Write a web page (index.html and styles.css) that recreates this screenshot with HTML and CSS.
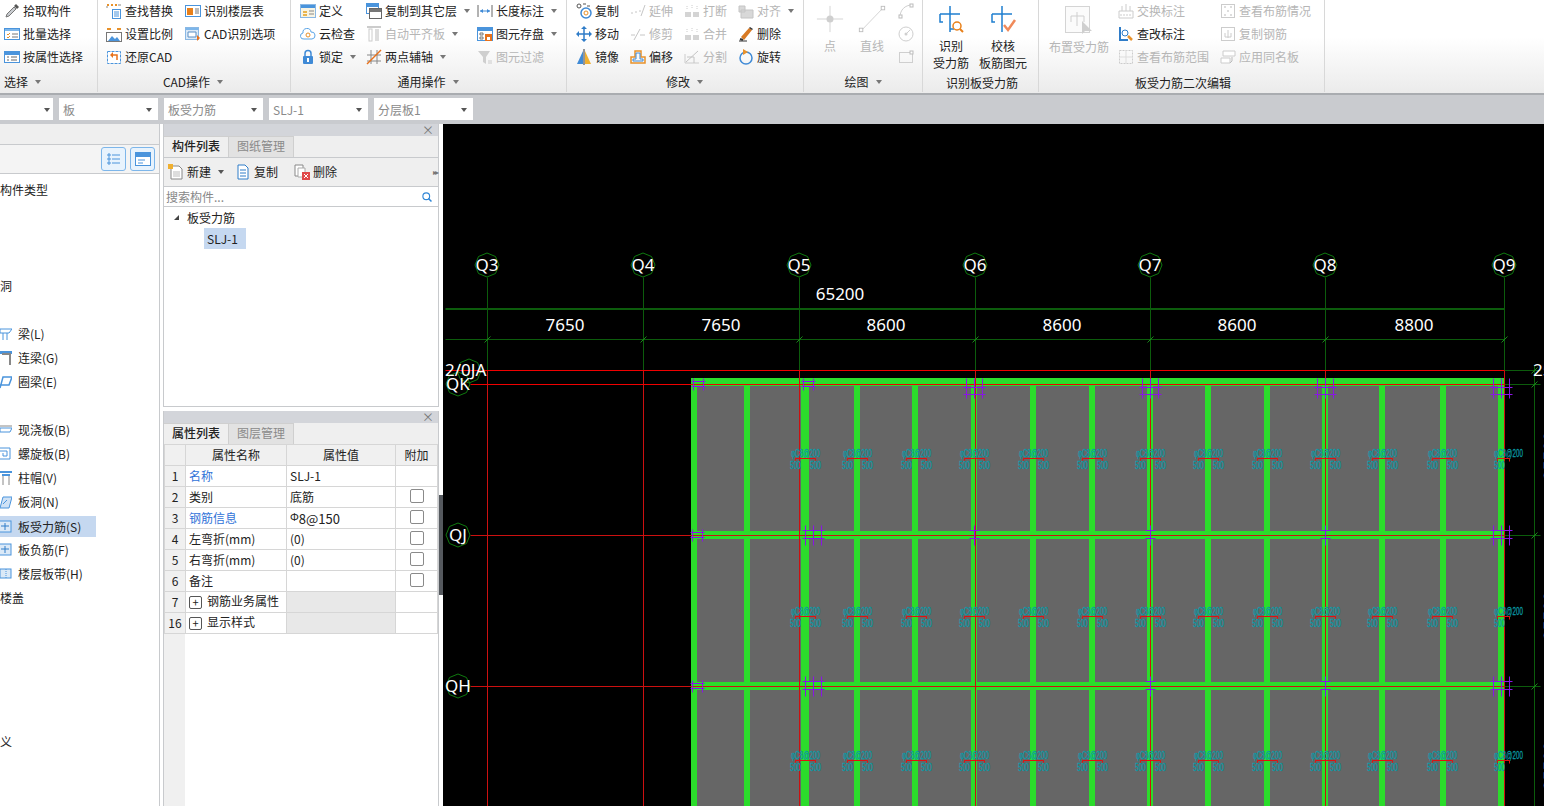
FILE: index.html
```html
<!DOCTYPE html>
<html lang="zh-CN">
<head>
    <meta charset="UTF-8">
    <title>板受力筋</title>
    <link rel="stylesheet" href="styles.css">
</head>
<body>
    <!-- icon library -->
    <svg class="defs" width="0" height="0">
        <symbol id="i-pick" viewBox="0 0 16 16"><path d="M2 14l1-3 7-7 2 2-7 7z" fill="#c9ccd0" stroke="#777"/><path d="M10 3l2-2 3 3-2 2z" fill="#555"/></symbol>
        <symbol id="i-batch" viewBox="0 0 16 16"><rect x=".5" y="2.5" width="15" height="11" fill="#fff" stroke="#4a94dc"/><rect x="1" y="3" width="14" height="2" fill="#7db6ea"/><path d="M3 8l1 1 2-2M3 11l1 1 2-2" stroke="#e8912a" fill="none"/><path d="M8 8h6M8 11h6" stroke="#777"/></symbol>
        <symbol id="i-attr" viewBox="0 0 16 16"><rect x=".5" y="2.5" width="15" height="11" fill="#fff" stroke="#4a94dc"/><rect x="1" y="3" width="14" height="3" fill="#4a94dc"/><path d="M3 8h2M3 11h2M7 8h6M7 11h6" stroke="#666"/></symbol>
        <symbol id="i-find" viewBox="0 0 16 16"><path d="M1 2h2M5 2h2M9 2h2" stroke="#e8912a" stroke-width="2"/><path d="M1 5v-2M12 2h3" stroke="#888"/><rect x="6.5" y="6.5" width="8" height="9" fill="#fff" stroke="#4a94dc"/><path d="M8 9h5M8 11h5M8 13h5" stroke="#4a94dc"/></symbol>
        <symbol id="i-scale" viewBox="0 0 16 16"><path d="M1 3h4M11 3h4" stroke="#e8912a" stroke-width="2"/><rect x=".5" y="6.5" width="15" height="9" fill="#fff" stroke="#777"/><path d="M2 15l4-5 3 3 2-2 3 4z" fill="#4a94dc"/></symbol>
        <symbol id="i-restore" viewBox="0 0 16 16"><rect x="1.5" y="2.5" width="13" height="12" fill="#fff" stroke="#4a94dc" stroke-dasharray="3 1"/><path d="M11 11V6H6" fill="none" stroke="#e8711a" stroke-width="1.5"/><path d="M7 3L4 6l3 3z" fill="#e8711a"/></symbol>
        <symbol id="i-table" viewBox="0 0 16 16"><rect x=".5" y="2.5" width="15" height="11" fill="#fff" stroke="#4a94dc"/><rect x="2" y="5" width="6" height="7" fill="#e8801a"/><path d="M10 6h4M10 8h4M10 10h4" stroke="#777"/></symbol>
        <symbol id="i-cadopt" viewBox="0 0 16 16"><rect x=".5" y="1.5" width="13" height="12" fill="#dbe9f7" stroke="#8ab8e4"/><rect x="1" y="2" width="12" height="2" fill="#7db6ea"/><path d="M3 6h8v5H3z" fill="#fff" stroke="#5b8fc4"/><path d="M12 9l3 3-3 3z" fill="#e8711a"/></symbol>
        <symbol id="i-define" viewBox="0 0 16 16"><rect x=".5" y="1.5" width="15" height="13" fill="#f8f4e4" stroke="#8ab8e4"/><rect x="1" y="2" width="14" height="3" fill="#4a94dc"/><path d="M3 8h4v2H3zM3 11h4v2H3z" fill="#e9b44c"/><path d="M9 8h5M9 11h5" stroke="#888"/></symbol>
        <symbol id="i-layer" viewBox="0 0 16 16"><rect x=".5" y=".5" width="12" height="10" fill="#fff" stroke="#4a94dc"/><rect x="1" y="1" width="11" height="3" fill="#4a94dc"/><rect x="3.5" y="5.5" width="12" height="10" fill="#fff" stroke="#666"/><rect x="4" y="6" width="11" height="3" fill="#777"/></symbol>
        <symbol id="i-length" viewBox="0 0 16 16"><path d="M1 2v12M15 2v12" stroke="#666"/><path d="M3 8h10" stroke="#3f8ad6"/><path d="M3 8l3-2v4zM13 8l-3-2v4z" fill="#3f8ad6"/></symbol>
        <symbol id="i-cloud" viewBox="0 0 16 16"><path d="M4 13a3 3 0 0 1-1-6 4 4 0 0 1 8-1 3.500 3.500 0 0 1 1 7z" fill="#fff" stroke="#5aa4e6"/><circle cx="8" cy="9" r="2" fill="none" stroke="#e8912a"/></symbol>
        <symbol id="i-align" viewBox="0 0 16 16"><path d="M1 1h14" stroke="#ccc" stroke-width="2"/><rect x="3" y="3" width="3" height="12" fill="#fff" stroke="#ccc"/><rect x="9" y="3" width="4" height="12" fill="#ddd"/></symbol>
        <symbol id="i-lock" viewBox="0 0 16 16"><path d="M5 7V4.500a3 3 0 0 1 6 0V7" fill="none" stroke="#3f8ad6" stroke-width="1.500"/><rect x="3" y="7" width="10" height="8" rx="1" fill="#3f8ad6"/><rect x="7" y="9" width="2" height="4" fill="#fff"/></symbol>
        <symbol id="i-axis" viewBox="0 0 16 16"><path d="M1 6h14M1 12h14M5 1v14M11 1v14" stroke="#888"/><path d="M1 15L15 1" stroke="#e8711a" stroke-width="1.500"/></symbol>
        <symbol id="i-save" viewBox="0 0 16 16"><rect x=".5" y="1.500" width="15" height="13" fill="#fff" stroke="#4a94dc"/><rect x="1" y="2" width="14" height="3" fill="#4a94dc"/><path d="M3 7h3v2H3zM3 11h3v2H3z" fill="none" stroke="#777"/><rect x="8" y="8" width="7" height="7" fill="#e8711a"/><rect x="10" y="11" width="3" height="3" fill="#fff"/></symbol>
        <symbol id="i-filter" viewBox="0 0 16 16"><path d="M1 2h12L9 8v7L6 13V8z" fill="#cfcfcf"/><path d="M11 12h4M11 14h4" stroke="#ccc"/></symbol>
        <symbol id="i-copy" viewBox="0 0 16 16"><circle cx="3" cy="3" r="2" fill="none" stroke="#555"/><path d="M7 1h3M11 3h3" stroke="#555"/><circle cx="10" cy="10" r="5" fill="none" stroke="#3f8ad6" stroke-width="1.500"/><circle cx="10" cy="10" r="2" fill="none" stroke="#e8912a"/></symbol>
        <symbol id="i-move" viewBox="0 0 16 16"><path d="M3 8h10M8 3v10" stroke="#2f7cc8" stroke-width="1.500"/><path d="M8 0l3 3H5zM8 16l3-3H5zM0 8l3-3v6zM16 8l-3-3v6z" fill="#2f7cc8"/></symbol>
        <symbol id="i-mirror" viewBox="0 0 16 16"><path d="M7 2v13H1z" fill="#3f8ad6"/><path d="M9 2v13h6z" fill="#f0b030"/><path d="M8 0v16" stroke="#333"/></symbol>
        <symbol id="i-offset" viewBox="0 0 16 16"><path d="M5 2h6v6h4v6H1V8h4z" fill="none" stroke="#e8912a" stroke-width="1.500"/><path d="M3 10h3V4h4v6h3v2H3z" fill="none" stroke="#3f8ad6"/></symbol>
        <symbol id="i-extend" viewBox="0 0 16 16"><path d="M1 10h2M5 9h2M9 8h2" stroke="#c6c6c6"/><path d="M11 13l4-11" stroke="#c6c6c6"/></symbol>
        <symbol id="i-trim" viewBox="0 0 16 16"><path d="M1 9h4M10 9h5" stroke="#c6c6c6"/><path d="M4 14l6-11" stroke="#c6c6c6"/></symbol>
        <symbol id="i-break" viewBox="0 0 16 16"><path d="M1 9h6v5H1zM9 9h6v5H9z" fill="#d4d4d4"/><path d="M3 3v4M8 2v3M13 3v4" stroke="#ccc" stroke-dasharray="1 1"/></symbol>
        <symbol id="i-same" viewBox="0 0 16 16"><path d="M1 3h6v6H1zM3 7h12v8H3z" fill="#d8d8d8" stroke="#c4c4c4"/></symbol>
        <symbol id="i-split" viewBox="0 0 16 16"><path d="M1 5v9h14" fill="none" stroke="#ccc"/><path d="M2 13L14 2M3 8h7v6" fill="none" stroke="#c4c4c4"/></symbol>
        <symbol id="i-del" viewBox="0 0 16 16"><path d="M3 11l8-9 3 2-8 10z" fill="#d87a24"/><path d="M11 2l1-1 3 2-1 1z" fill="#333"/><path d="M1 15h8" stroke="#333"/><path d="M2 13l3 1" stroke="#333" stroke-width="2"/></symbol>
        <symbol id="i-rot" viewBox="0 0 16 16"><circle cx="8" cy="9" r="6" fill="none" stroke="#3f8ad6" stroke-width="1.500"/><path d="M5 0l5 3-5 3z" fill="#e8912a"/></symbol>
        <symbol id="i-point" viewBox="0 0 32 32"><path d="M16 1v30M1 16h30" stroke="#cfcfcf"/><circle cx="16" cy="16" r="4" fill="#cfcfcf"/></symbol>
        <symbol id="i-line" viewBox="0 0 32 32"><path d="M4 29L29 3" stroke="#cfcfcf"/><rect x="1.500" y="26.500" width="4" height="4" fill="#fff" stroke="#bbb"/><rect x="26.500" y="1.500" width="4" height="4" fill="#fff" stroke="#bbb"/></symbol>
        <symbol id="i-arc" viewBox="0 0 16 16"><path d="M2 14C2 7 7 2 14 2" fill="none" stroke="#cfcfcf"/><rect x="1" y="12" width="3" height="3" fill="#fff" stroke="#bbb"/><rect x="12" y="1" width="3" height="3" fill="#fff" stroke="#bbb"/></symbol>
        <symbol id="i-circ" viewBox="0 0 16 16"><circle cx="8" cy="8" r="7" fill="none" stroke="#cfcfcf"/><circle cx="8" cy="8" r="1.500" fill="#cfcfcf"/><path d="M8 8l4-4" stroke="#cfcfcf"/></symbol>
        <symbol id="i-rect" viewBox="0 0 16 16"><rect x="1.500" y="3.500" width="13" height="10" fill="none" stroke="#cfcfcf"/><rect x="12" y="2" width="3" height="3" fill="#fff" stroke="#bbb"/></symbol>
        <symbol id="i-read" viewBox="0 0 28 28"><path d="M13 1v26M3 9h20" stroke="#1f7fd0" stroke-width="1.500"/><path d="M3 9v8h3M23 9v0M13 24h4" fill="none" stroke="#1f7fd0" stroke-width="1.500"/><circle cx="20" cy="21" r="4" fill="#fff" stroke="#e8801a" stroke-width="1.500"/><path d="M23 24l3 3" stroke="#e8801a" stroke-width="2"/></symbol>
        <symbol id="i-check" viewBox="0 0 28 28"><path d="M13 1v26M3 9h20" stroke="#1f7fd0" stroke-width="1.500"/><path d="M3 9v8h3" fill="none" stroke="#1f7fd0" stroke-width="1.500"/><path d="M15 20l4 5 7-10" fill="none" stroke="#f08a5a" stroke-width="2.500"/></symbol>
        <symbol id="i-place" viewBox="0 0 28 28"><rect x=".5" y=".5" width="24" height="26" fill="#fbfbfb" stroke="#d4d4d4"/><path d="M12 6v14M6 10h13M6 10v6M19 10v6" fill="none" stroke="#cfcfcf"/><path d="M17 15l10 10H20l-3 3z" fill="#cfcfcf"/></symbol>
        <symbol id="i-swap" viewBox="0 0 16 16"><path d="M1 8h14v7H1z" fill="#fff" stroke="#ccc"/><path d="M4 8v-5M8 8v-7M12 8v-5M3 11v2M6 11v2M9 11v2M12 11v2" stroke="#ccc"/></symbol>
        <symbol id="i-edit" viewBox="0 0 16 16"><path d="M2 1v13h8" fill="none" stroke="#2f7cc8" stroke-width="2"/><circle cx="7" cy="7" r="3" fill="#fff" stroke="#2f7cc8"/><path d="M10 10l4 4" stroke="#e8912a" stroke-width="2.500"/></symbol>
        <symbol id="i-range" viewBox="0 0 16 16"><rect x="1.500" y="1.500" width="13" height="13" fill="none" stroke="#ccc" stroke-dasharray="2 1"/><path d="M8 1v14M1 8h14" stroke="#ddd"/></symbol>
        <symbol id="i-view" viewBox="0 0 16 16"><rect x="1.500" y="1.500" width="13" height="13" fill="#fff" stroke="#ccc"/><path d="M4 4h2M10 4h2M8 7v2M4 12h2M10 12h2" stroke="#bbb"/></symbol>
        <symbol id="i-dup" viewBox="0 0 16 16"><rect x="1.500" y="1.500" width="13" height="13" fill="#fff" stroke="#ccc"/><path d="M8 4v8M5 7v4h6V7" fill="none" stroke="#ccc"/></symbol>
        <symbol id="i-apply" viewBox="0 0 16 16"><path d="M3 2h12v5H3zM1 9h9v5H1z" fill="#fff" stroke="#ccc"/><path d="M12 8v4l-2 2" fill="none" stroke="#bbb"/></symbol>
        <symbol id="i-list" viewBox="0 0 16 16"><path d="M2 3h2v2H2zM2 7h2v2H2zM2 11h2v2H2z" fill="none" stroke="#4a94dc"/><path d="M6 4h8M6 8h8M6 12h8" stroke="#4a94dc"/></symbol>
        <symbol id="i-form" viewBox="0 0 16 16"><rect x=".5" y="1.500" width="15" height="13" fill="#fff" stroke="#4a94dc"/><rect x="1" y="2" width="14" height="4" fill="#4a94dc"/><path d="M3 9h7M3 12h5" stroke="#4a94dc"/></symbol>
        <symbol id="i-new" viewBox="0 0 16 16"><path d="M3 2h8l3 3v10H3z" fill="#fff" stroke="#888"/><path d="M5 8h7M5 10h7M5 12h7" stroke="#bbb"/><rect x="0" y="0" width="5" height="5" fill="#f0b030"/></symbol>
        <symbol id="i-dcopy" viewBox="0 0 16 16"><path d="M3 1h7l3 3v11H3z" fill="#fff" stroke="#2f7cc8"/><path d="M5 6h6M5 9h6M5 12h6" stroke="#2f7cc8"/></symbol>
        <symbol id="i-ddel" viewBox="0 0 16 16"><path d="M1 1h8v11H1z" fill="#fff" stroke="#888"/><path d="M4 4h7v9H4z" fill="#fff" stroke="#aaa"/><rect x="8" y="8" width="8" height="8" fill="#e04a4a"/><path d="M10 10l4 4M14 10l-4 4" stroke="#fff"/></symbol>
        <symbol id="i-search" viewBox="0 0 16 16"><circle cx="7" cy="7" r="4.500" fill="none" stroke="#2f86d6" stroke-width="1.500"/><path d="M10 10l4 4" stroke="#2f86d6" stroke-width="2"/></symbol>
        <symbol id="t-beam" viewBox="0 0 12 16"><path d="M0 3h12l-3 4H0zM3 7v7M7 7v7" fill="none" stroke="#4a94dc"/></symbol>
        <symbol id="t-lintel" viewBox="0 0 12 16"><path d="M0 1h12v3H0z" fill="#4a94dc"/><path d="M2 4h8v11" fill="none" stroke="#888" stroke-width="2"/></symbol>
        <symbol id="t-ring" viewBox="0 0 12 16"><path d="M0 14l3-11h9l-3 8H0" fill="none" stroke="#4a94dc" stroke-width="1.500"/></symbol>
        <symbol id="t-slab" viewBox="0 0 12 16"><path d="M0 6h12l-2 4H0z" fill="#fff" stroke="#4a94dc"/><path d="M0 4h12" stroke="#888"/></symbol>
        <symbol id="t-spiral" viewBox="0 0 12 16"><path d="M0 2h10v11H0M0 5h7v5H3V7" fill="none" stroke="#4a94dc"/></symbol>
        <symbol id="t-cap" viewBox="0 0 12 16"><path d="M0 2h12M2 5h8" stroke="#4a94dc" stroke-width="2"/><path d="M3 6v9M9 6v9" stroke="#888"/></symbol>
        <symbol id="t-hole" viewBox="0 0 12 16"><path d="M0 14l3-11h9l-3 11z" fill="#cfe2f6" stroke="#4a94dc"/><path d="M3 10l4-4" stroke="#4a94dc"/></symbol>
        <symbol id="t-bar" viewBox="0 0 12 16"><rect x="-2" y="2" width="13" height="11" fill="#dbe9f7" stroke="#4a94dc"/><path d="M5 4v7M1 7h8" stroke="#2f7cc8"/></symbol>
        <symbol id="t-strip" viewBox="0 0 12 16"><rect x="0" y="3" width="11" height="9" fill="#dbe9f7" stroke="#4a94dc"/><path d="M6 3v9" stroke="#4a94dc" stroke-dasharray="1 1"/></symbol>
    </svg>

    <header class="ribbon">
        <section class="group g-select">
            <div class="group-body">
                <div class="col">
                    <div class="tool"><svg class="ic"><use href="#i-pick"/></svg><span>拾取构件</span></div>
                    <div class="tool"><svg class="ic"><use href="#i-batch"/></svg><span>批量选择</span></div>
                    <div class="tool"><svg class="ic"><use href="#i-attr"/></svg><span>按属性选择</span></div>
                </div>
            </div>
            <div class="group-label left">选择<i class="caret"></i></div>
        </section>
        <section class="group g-cad">
            <div class="group-body">
                <div class="col w79">
                    <div class="tool"><svg class="ic"><use href="#i-find"/></svg><span>查找替换</span></div>
                    <div class="tool"><svg class="ic"><use href="#i-scale"/></svg><span>设置比例</span></div>
                    <div class="tool"><svg class="ic"><use href="#i-restore"/></svg><span>还原CAD</span></div>
                </div>
                <div class="col">
                    <div class="tool"><svg class="ic"><use href="#i-table"/></svg><span>识别楼层表</span></div>
                    <div class="tool"><svg class="ic"><use href="#i-cadopt"/></svg><span>CAD识别选项</span></div>
                </div>
            </div>
            <div class="group-label">CAD操作<i class="caret"></i></div>
        </section>
        <section class="group g-common">
            <div class="group-body">
                <div class="col w66">
                    <div class="tool"><svg class="ic"><use href="#i-define"/></svg><span>定义</span></div>
                    <div class="tool"><svg class="ic"><use href="#i-cloud"/></svg><span>云检查</span></div>
                    <div class="tool"><svg class="ic"><use href="#i-lock"/></svg><span>锁定</span><i class="caret"></i></div>
                </div>
                <div class="col w111">
                    <div class="tool"><svg class="ic"><use href="#i-layer"/></svg><span>复制到其它层</span><i class="caret"></i></div>
                    <div class="tool off"><svg class="ic"><use href="#i-align"/></svg><span>自动平齐板</span><i class="caret"></i></div>
                    <div class="tool"><svg class="ic"><use href="#i-axis"/></svg><span>两点辅轴</span><i class="caret"></i></div>
                </div>
                <div class="col">
                    <div class="tool"><svg class="ic"><use href="#i-length"/></svg><span>长度标注</span><i class="caret"></i></div>
                    <div class="tool"><svg class="ic"><use href="#i-save"/></svg><span>图元存盘</span><i class="caret"></i></div>
                    <div class="tool off"><svg class="ic"><use href="#i-filter"/></svg><span>图元过滤</span></div>
                </div>
            </div>
            <div class="group-label">通用操作<i class="caret"></i></div>
        </section>
        <section class="group g-modify">
            <div class="group-body">
                <div class="col w54">
                    <div class="tool"><svg class="ic"><use href="#i-copy"/></svg><span>复制</span></div>
                    <div class="tool"><svg class="ic"><use href="#i-move"/></svg><span>移动</span></div>
                    <div class="tool"><svg class="ic"><use href="#i-mirror"/></svg><span>镜像</span></div>
                </div>
                <div class="col w54">
                    <div class="tool off"><svg class="ic"><use href="#i-extend"/></svg><span>延伸</span></div>
                    <div class="tool off"><svg class="ic"><use href="#i-trim"/></svg><span>修剪</span></div>
                    <div class="tool"><svg class="ic"><use href="#i-offset"/></svg><span>偏移</span></div>
                </div>
                <div class="col w54">
                    <div class="tool off"><svg class="ic"><use href="#i-break"/></svg><span>打断</span></div>
                    <div class="tool off"><svg class="ic"><use href="#i-break"/></svg><span>合并</span></div>
                    <div class="tool off"><svg class="ic"><use href="#i-split"/></svg><span>分割</span></div>
                </div>
                <div class="col">
                    <div class="tool off"><svg class="ic"><use href="#i-same"/></svg><span>对齐</span><i class="caret"></i></div>
                    <div class="tool"><svg class="ic"><use href="#i-del"/></svg><span>删除</span></div>
                    <div class="tool"><svg class="ic"><use href="#i-rot"/></svg><span>旋转</span></div>
                </div>
            </div>
            <div class="group-label">修改<i class="caret"></i></div>
        </section>
        <section class="group g-draw">
            <div class="group-body">
                <div class="big off w32"><svg class="ic-big"><use href="#i-point"/></svg><span>点</span></div>
                <div class="big off w32"><svg class="ic-big"><use href="#i-line"/></svg><span>直线</span></div>
                <div class="col">
                    <div class="tool"><svg class="ic"><use href="#i-arc"/></svg></div>
                    <div class="tool"><svg class="ic"><use href="#i-circ"/></svg></div>
                    <div class="tool"><svg class="ic"><use href="#i-rect"/></svg></div>
                </div>
            </div>
            <div class="group-label">绘图<i class="caret"></i></div>
        </section>
        <section class="group g-read">
            <div class="group-body">
                <div class="big w36"><svg class="ic-big"><use href="#i-read"/></svg><span>识别<br>受力筋</span></div>
                <div class="big w48"><svg class="ic-big"><use href="#i-check"/></svg><span>校核<br>板筋图元</span></div>
            </div>
            <div class="group-label low">识别板受力筋</div>
        </section>
        <section class="group g-edit">
            <div class="group-body">
                <div class="big off w60"><svg class="ic-big"><use href="#i-place"/></svg><span>布置受力筋</span></div>
                <div class="col w102">
                    <div class="tool off"><svg class="ic"><use href="#i-swap"/></svg><span>交换标注</span></div>
                    <div class="tool"><svg class="ic"><use href="#i-edit"/></svg><span>查改标注</span></div>
                    <div class="tool off"><svg class="ic"><use href="#i-range"/></svg><span>查看布筋范围</span></div>
                </div>
                <div class="col">
                    <div class="tool off"><svg class="ic"><use href="#i-view"/></svg><span>查看布筋情况</span></div>
                    <div class="tool off"><svg class="ic"><use href="#i-dup"/></svg><span>复制钢筋</span></div>
                    <div class="tool off"><svg class="ic"><use href="#i-apply"/></svg><span>应用同名板</span></div>
                </div>
            </div>
            <div class="group-label low">板受力筋二次编辑</div>
        </section>
    </header>

    <div class="combo-bar">
        <div class="combo first"><i class="caret dark"></i></div>
        <div class="combo"><span>板</span><i class="caret dark"></i></div>
        <div class="combo"><span>板受力筋</span><i class="caret dark"></i></div>
        <div class="combo"><span>SLJ-1</span><i class="caret dark"></i></div>
        <div class="combo"><span>分层板1</span><i class="caret dark"></i></div>
    </div>

    <main class="main">
        <aside class="nav">
            <div class="nav-top"></div>
            <div class="nav-tools">
                <button class="view-btn"><svg class="ic"><use href="#i-list"/></svg></button>
                <button class="view-btn"><svg class="ic"><use href="#i-form"/></svg></button>
            </div>
            <ul class="nav-list">
                <li class="flush">构件类型</li>
                <li></li><li></li><li></li>
                <li class="flush">洞</li>
                <li></li>
                <li><svg class="nav-ic"><use href="#t-beam"/></svg>梁(L)</li>
                <li><svg class="nav-ic"><use href="#t-lintel"/></svg>连梁(G)</li>
                <li><svg class="nav-ic"><use href="#t-ring"/></svg>圈梁(E)</li>
                <li></li>
                <li><svg class="nav-ic"><use href="#t-slab"/></svg>现浇板(B)</li>
                <li><svg class="nav-ic"><use href="#t-spiral"/></svg>螺旋板(B)</li>
                <li><svg class="nav-ic"><use href="#t-cap"/></svg>柱帽(V)</li>
                <li><svg class="nav-ic"><use href="#t-hole"/></svg>板洞(N)</li>
                <li class="selected"><svg class="nav-ic"><use href="#t-bar"/></svg><span>板受力筋(S)</span></li>
                <li><svg class="nav-ic"><use href="#t-bar"/></svg>板负筋(F)</li>
                <li><svg class="nav-ic"><use href="#t-strip"/></svg>楼层板带(H)</li>
                <li class="flush">楼盖</li>
                <li></li><li></li><li></li><li></li><li></li>
                <li class="flush">义</li>
            </ul>
        </aside>

        <div class="side">
            <section class="panel panel-list">
                <div class="panel-title">×</div>
                <div class="tabs">
                    <div class="tab active">构件列表</div>
                    <div class="tab">图纸管理</div>
                </div>
                <div class="list-tools">
                    <div class="list-tool"><svg class="ic"><use href="#i-new"/></svg><span>新建</span><i class="caret dark"></i></div>
                    <div class="list-tool"><svg class="ic"><use href="#i-dcopy"/></svg><span>复制</span></div>
                    <div class="list-tool last"><svg class="ic"><use href="#i-ddel"/></svg><span>删除</span></div>
                    <div class="more">▸▸</div>
                </div>
                <div class="search"><span>搜索构件...</span><svg class="ic-sm"><use href="#i-search"/></svg></div>
                <div class="tree">
                    <div class="tree-root"><i class="twist"></i>板受力筋</div>
                    <div class="tree-leaf">SLJ-1</div>
                </div>
            </section>
            <section class="panel panel-props">
                <div class="panel-title">×</div>
                <div class="tabs">
                    <div class="tab active">属性列表</div>
                    <div class="tab">图层管理</div>
                </div>
                <div class="props-wrap">
                    <table class="props">
                        <colgroup><col class="c-num"><col class="c-name"><col class="c-val"><col class="c-add"></colgroup>
                        <tr><th></th><th>属性名称</th><th>属性值</th><th>附加</th></tr>
                        <tr><td class="num">1</td><td class="link">名称</td><td>SLJ-1</td><td></td></tr>
                        <tr><td class="num">2</td><td>类别</td><td>底筋</td><td class="chk"><i class="check"></i></td></tr>
                        <tr><td class="num">3</td><td class="link">钢筋信息</td><td class="rebar-info"><small class="steel">Φ</small>8@150</td><td class="chk"><i class="check"></i></td></tr>
                        <tr><td class="num">4</td><td>左弯折(mm)</td><td>(0)</td><td class="chk"><i class="check"></i></td></tr>
                        <tr><td class="num">5</td><td>右弯折(mm)</td><td>(0)</td><td class="chk"><i class="check"></i></td></tr>
                        <tr><td class="num">6</td><td>备注</td><td></td><td class="chk"><i class="check"></i></td></tr>
                        <tr><td class="num">7</td><td><i class="plus">+</i>钢筋业务属性</td><td class="grey"></td><td></td></tr>
                        <tr><td class="num">16</td><td><i class="plus">+</i>显示样式</td><td class="grey"></td><td></td></tr>
                    </table>
                </div>
            </section>
        </div>

        <div class="splitter"><div class="splitter-grip"></div></div>

        <div class="canvas">
            <svg class="drawing" viewBox="443 124 1101 682" width="1101" height="682">
                <defs>
                    <polygon id="hub" points="0,-12 8.500,-8.500 12,0 8.500,8.500 0,12 -8.500,8.500 -12,0 -8.500,-8.500"/>
                    <g id="mark-top" class="mark"><path d="M-8 0v20M0 0v20M8 0v20M-11 9h22M-11 16h22"/></g>
                    <g id="mark-mid" class="mark"><path d="M-8 0v20M0 0v20M8 0v20M-11 5h22M-11 13h22"/></g>
                    <g id="mark-two" class="mark"><path d="M-5 0v12M5 0v12M-7 3h14M-7 8h14"/></g>
                    <g id="mark-small" class="mark"><path d="M0 0v20M-5 5h10M-5 13h10"/></g>
                    <g id="lab">
                        <text class="rebar" x="-14" y="8" textLength="29" lengthAdjust="spacingAndGlyphs">φC8@200</text>
                        <path class="bracket" d="M-10 12V9H10V12"/>
                        <text class="rebar" x="-15" y="20" textLength="11" lengthAdjust="spacingAndGlyphs">500</text>
                        <text class="rebar" x="5" y="20" textLength="11" lengthAdjust="spacingAndGlyphs">500</text>
                    </g>
                    <g id="lab-end">
                        <text class="rebar" x="-13" y="8" textLength="29" lengthAdjust="spacingAndGlyphs">φC8@200</text>
                        <path class="bracket" d="M-10 12V9H2V12"/>
                        <text class="rebar" x="-13" y="20" textLength="11" lengthAdjust="spacingAndGlyphs">500</text>
                    </g>
                    <g id="lab-row">
                        <use href="#lab" x="805"/><use href="#lab" x="857"/><use href="#lab" x="916"/>
                        <use href="#lab" x="974"/><use href="#lab" x="1033"/><use href="#lab" x="1092"/>
                        <use href="#lab" x="1150"/><use href="#lab" x="1208"/><use href="#lab" x="1267"/>
                        <use href="#lab" x="1325"/><use href="#lab" x="1382"/><use href="#lab" x="1442"/>
                        <use href="#lab-end" x="1507"/>
                    </g>
                </defs>

                <!-- slab -->
                <rect class="slab" x="691" y="378" width="814" height="428"/>
                <g class="band">
                    <rect x="691" y="378" width="814" height="8"/>
                    <rect x="691" y="531" width="814" height="8"/>
                    <rect x="691" y="682" width="814" height="8"/>
                    <rect x="691" y="378" width="6" height="428"/>
                    <rect x="744" y="378" width="6" height="428"/>
                    <rect x="801" y="378" width="8" height="428"/>
                    <rect x="854" y="378" width="6" height="428"/>
                    <rect x="912" y="378" width="6" height="428"/>
                    <rect x="971" y="378" width="6" height="428"/>
                    <rect x="1030" y="378" width="6" height="428"/>
                    <rect x="1089" y="378" width="6" height="428"/>
                    <rect x="1147" y="378" width="6" height="428"/>
                    <rect x="1205" y="378" width="6" height="428"/>
                    <rect x="1264" y="378" width="6" height="428"/>
                    <rect x="1322" y="378" width="6" height="428"/>
                    <rect x="1379" y="378" width="6" height="428"/>
                    <rect x="1440" y="378" width="6" height="428"/>
                    <rect x="1498" y="378" width="6" height="428"/>
                </g>

                <!-- axis and dimension lines -->
                <g class="axis">
                    <path d="M487 277V370M643 277V370M799 277V370M975 277V370M1150 277V370M1325 277V370M1504 277V370"/>
                    <path d="M445 339H1504M1504 370H1540M1504 384H1540M1504 535H1540M1504 686H1540"/>
                    <path class="thick" d="M445 309H1504"/>
                    <path d="M1534 365V806"/>
                    <path class="tick" d="M484 342l6-6M640 342l6-6M796 342l6-6M972 342l6-6M1147 342l6-6M1322 342l6-6M1501 342l6-6M1531 373l6-6M1531 387l6-6M1531 538l6-6M1531 689l6-6"/>
                </g>
                <g class="grid-red">
                    <path d="M487 370V806M643 370V806M799 370V806M975 370V806M1150 370V806M1325 370V806M1504 370V806"/>
                    <path class="bright" d="M445 370H1504M470 384H1504"/>
                    <path d="M470 535H1504M470 686H1504"/>
                </g>

                <!-- rebar marks -->
                <use href="#mark-two" x="698" y="378"/>
                <use href="#mark-two" x="808" y="378"/>
                <use href="#mark-top" x="974" y="378"/>
                <use href="#mark-top" x="1150" y="378"/>
                <use href="#mark-top" x="1325" y="378"/>
                <use href="#mark-top" x="1501" y="378"/>
                <use href="#mark-two" x="697" y="529"/>
                <use href="#mark-mid" x="813" y="525"/>
                <use href="#mark-small" x="974" y="525"/>
                <use href="#mark-small" x="1150" y="525"/>
                <use href="#mark-small" x="1325" y="525"/>
                <use href="#mark-mid" x="1501" y="525"/>
                <use href="#mark-two" x="697" y="680"/>
                <use href="#mark-mid" x="813" y="676"/>
                <use href="#mark-small" x="1150" y="676"/>
                <use href="#mark-small" x="1325" y="676"/>
                <use href="#mark-mid" x="1501" y="676"/>

                <use href="#lab-row" y="449"/>
                <use href="#lab-row" y="607"/>
                <use href="#lab-row" y="751"/>

                <!-- axis bubbles -->
                <g class="hub">
                    <use href="#hub" x="487" y="265"/><use href="#hub" x="643" y="265"/>
                    <use href="#hub" x="799" y="265"/><use href="#hub" x="975" y="265"/>
                    <use href="#hub" x="1150" y="265"/><use href="#hub" x="1325" y="265"/>
                    <use href="#hub" x="1504" y="265"/>
                    <use href="#hub" x="469" y="371"/><use href="#hub" x="458" y="384"/>
                    <use href="#hub" x="458" y="535"/><use href="#hub" x="458" y="686"/>
                </g>
                <g class="dim mid-text">
                    <text x="487" y="271">Q3</text><text x="643" y="271">Q4</text>
                    <text x="799" y="271">Q5</text><text x="975" y="271">Q6</text>
                    <text x="1150" y="271">Q7</text><text x="1325" y="271">Q8</text>
                    <text x="1504" y="271">Q9</text>
                    <text x="840" y="300">65200</text>
                    <text x="565" y="331">7650</text><text x="721" y="331">7650</text>
                    <text x="886" y="331">8600</text><text x="1062" y="331">8600</text>
                    <text x="1237" y="331">8600</text><text x="1414" y="331">8800</text>
                    <text x="458" y="541">QJ</text><text x="458" y="692">QH</text>
                    <text x="458" y="390">QK</text>
                </g>
                <g class="dim">
                    <text x="445" y="376">2/0JA</text>
                    <text x="1533" y="376">25</text>
                    <text transform="translate(1556 480) rotate(-90)">25500</text>
                    <text transform="translate(1556 640) rotate(-90)">25500</text>
                    <text transform="translate(1556 790) rotate(-90)">25500</text>
                </g>
            </svg>
        </div>
    </main>
</body>
</html>
```

FILE: styles.css
```css
* {
    box-sizing: border-box;
}
html, body {
    height: 100%;
}
body {
    margin: 0;
    display: flex;
    flex-direction: column;
    height: 806px;
    overflow: hidden;
    background-color: #fff;
    color: #222;
    font-family: "Noto Sans CJK SC", "Noto Sans", sans-serif;
    font-size: 12px;
    line-height: 1;
}
.defs {
    position: absolute;
}
.caret {
    display: inline-block;
    width: 0;
    height: 0;
    margin-left: 7px;
    border-left: 3.5px solid transparent;
    border-right: 3.5px solid transparent;
    border-top: 4px solid #777;
    vertical-align: middle;
}
.caret.dark {
    border-top-color: #555;
}

/* ribbon */
.ribbon {
    display: flex;
    flex: none;
    height: 95px;
    background: linear-gradient(#fff 0, #fff 40%, #ebebeb 100%);
    border-bottom: 2px solid #a9acb0;
}
.group {
    display: flex;
    flex-direction: column;
    flex: none;
    height: 92px;
    border-right: 1px solid #d8d8d8;
}
.g-select { width: 98px; padding-left: 4px; }
.g-cad { width: 193px; padding-left: 8px; }
.g-common { width: 276px; padding-left: 9px; }
.g-modify { width: 237px; padding-left: 9px; }
.g-draw { width: 119px; padding-left: 10px; }
.g-read { width: 116px; padding-left: 10px; }
.g-edit { width: 286px; padding-left: 10px; }
.group-body {
    display: flex;
    height: 69px;
    margin-top: -1px;
}
.group-label {
    display: flex;
    flex: 1;
    align-items: center;
    justify-content: center;
    padding-top: 4px;
    padding-right: 10px;
}
.group-label.left {
    justify-content: flex-start;
    padding-right: 0;
}
.group-label.low {
    padding-top: 6px;
    padding-right: 7px;
}
.col {
    display: flex;
    flex-direction: column;
}
.w54 { width: 54px; }
.w66 { width: 66px; }
.w79 { width: 79px; }
.w102 { width: 102px; }
.w111 { width: 111px; }
.tool {
    display: flex;
    align-items: center;
    height: 23px;
    white-space: nowrap;
}
.tool.off, .big.off {
    color: #b6b6b6;
}
.ic {
    flex: none;
    width: 16px;
    height: 16px;
    margin-right: 3px;
}
.big {
    display: flex;
    flex-direction: column;
    align-items: center;
    margin-right: 10px;
    padding-top: 6px;
    text-align: center;
    line-height: 17px;
}
.big span {
    margin-top: 4px;
    white-space: nowrap;
}
.ic-big {
    flex: none;
    width: 28px;
    height: 28px;
}
.g-edit .big {
    padding-top: 7px;
}
.w32 { width: 32px; }
.w36 { width: 36px; }
.w48 { width: 48px; }
.w60 { width: 60px; margin-right: 9px; }

/* combo row */
.combo-bar {
    display: flex;
    flex: none;
    gap: 6px;
    height: 29px;
    padding-top: 3px;
    background-color: #c9cbcf;
}
.combo {
    display: flex;
    align-items: center;
    justify-content: space-between;
    width: 99px;
    height: 22px;
    padding: 1px 6px 0 4px;
    background-color: #fff;
    color: #8a8a8a;
}
.combo.first {
    width: 53px;
    justify-content: flex-end;
    padding-right: 3px;
}

/* main area */
.main {
    display: flex;
    flex: 1;
    min-height: 0;
}
.nav {
    flex: none;
    width: 160px;
    overflow: hidden;
    border-right: 1px solid #c8cacd;
}
.nav-top {
    height: 21px;
    background-color: #efefef;
    border-bottom: 1px solid #c8cacd;
}
.nav-tools {
    display: flex;
    justify-content: flex-end;
    gap: 4px;
    height: 29px;
    padding: 2px 4px 0 0;
    background-color: #f4f4f4;
    border-bottom: 1px solid #c8cacd;
}
.view-btn {
    display: flex;
    align-items: center;
    justify-content: center;
    width: 25px;
    height: 24px;
    padding: 0;
    background-color: #e8f3fd;
    border: 1px solid #7db6ea;
    border-radius: 3px;
}
.view-btn .ic {
    margin: 0;
}
.nav-list {
    margin: 4px 0 0;
    padding: 0;
    list-style: none;
}
.nav-list li {
    display: flex;
    align-items: center;
    height: 24px;
    white-space: nowrap;
}
.nav-list li.selected {
    width: 96px;
    height: 21px;
    margin: 2px 0 1px;
    background-color: #c5d8f0;
}
.nav-ic {
    flex: none;
    width: 12px;
    height: 16px;
    margin-right: 6px;
}

/* list and property panels */
.side {
    display: flex;
    flex: none;
    flex-direction: column;
    gap: 4px;
    width: 276px;
    margin-left: 3px;
}
.panel {
    display: flex;
    flex-direction: column;
    background-color: #fff;
    border-left: 1px solid #c8cacd;
    border-right: 1px solid #c8cacd;
}
.panel-list {
    height: 283px;
    border-bottom: 1px solid #c8cacd;
}
.panel-props {
    flex: 1;
    min-height: 0;
}
.panel-title {
    flex: none;
    height: 12px;
    padding-right: 4px;
    background-color: #d3d5da;
    color: #777;
    font-size: 12px;
    line-height: 12px;
    text-align: right;
}
.tabs {
    display: flex;
    flex: none;
    height: 21px;
    background-color: #efefef;
}
.tab {
    width: 65px;
    padding-top: 3px;
    background-color: #e2e2e2;
    border-right: 1px solid #cfcfcf;
    border-top: 1px solid #cfcfcf;
    color: #8a8a8a;
    text-align: center;
}
.tab.active {
    background-color: #efefef;
    color: #222;
    font-weight: 500;
}
.list-tools {
    display: flex;
    flex: none;
    align-items: center;
    gap: 11px;
    height: 30px;
    padding-left: 4px;
    background-color: #efefef;
    border-top: 1px solid #c8cacd;
    border-bottom: 1px solid #c8cacd;
}
.list-tool {
    display: flex;
    align-items: center;
}
.list-tool.last {
    margin-left: 5px;
}
.more {
    margin-left: auto;
    padding-right: 1px;
    color: #777;
    font-size: 8px;
    letter-spacing: -2px;
}
.search {
    display: flex;
    flex: none;
    align-items: center;
    justify-content: space-between;
    height: 20px;
    padding: 0 5px 0 2px;
    border-bottom: 1px solid #c8cacd;
    color: #888;
}
.ic-sm {
    width: 12px;
    height: 12px;
}
.tree-root {
    display: flex;
    align-items: center;
    height: 21px;
    padding-left: 10px;
}
.twist {
    width: 0;
    height: 0;
    margin-right: 8px;
    border-left: 5px solid transparent;
    border-bottom: 5px solid #444;
}
.tree-leaf {
    width: 42px;
    height: 21px;
    margin-left: 40px;
    padding-left: 3px;
    background-color: #c5d8f0;
    line-height: 21px;
}
.props-wrap {
    flex: 1;
    background: linear-gradient(to right, #f0f0f0 21px, #fff 21px);
}
.props {
    width: 273px;
    table-layout: fixed;
    border-collapse: collapse;
}
.c-num { width: 21px; }
.c-name { width: 101px; }
.c-val { width: 109px; }
.c-add { width: 42px; }
.props tr {
    height: 21px;
}
.props th, .props td {
    padding: 0 0 0 3px;
    border: 1px solid #d6d6d6;
    border-top: 0;
    font-weight: 400;
    white-space: nowrap;
}
.props th {
    padding: 0;
    background-color: #f0f0f0;
    border-top: 1px solid #d6d6d6;
    text-align: center;
}
.props td.num {
    padding: 0;
    background-color: #f0f0f0;
    text-align: center;
}
.props td.link {
    color: #3173d8;
}
.props td.grey {
    background-color: #e8e8e8;
}
.props td.chk {
    padding: 0;
    text-align: center;
}
.props td.rebar-info {
    font-size: 13px;
}
.check {
    display: block;
    width: 14px;
    height: 14px;
    margin: 0 auto 2px;
    background-color: #fff;
    border: 1px solid #8a8a8a;
    border-radius: 2px;
}
.plus {
    display: inline-block;
    width: 13px;
    height: 13px;
    margin-right: 5px;
    border: 1px solid #555;
    border-radius: 2px;
    font-style: normal;
    font-size: 11px;
    line-height: 10px;
    text-align: center;
    vertical-align: -1px;
}
.steel {
    font-size: 11px;
    vertical-align: 3px;
}
.splitter {
    flex: none;
    width: 4px;
    padding-top: 371px;
    background-color: #fff;
}
.splitter-grip {
    width: 4px;
    height: 100px;
    background-color: #55595e;
}

/* drawing: half pixel shift keeps the 1px cad lines sharp */
.canvas {
    flex: 1;
    min-width: 0;
    overflow: hidden;
    background-color: #000;
}
.drawing {
    display: block;
}
.slab {
    fill: #666;
}
.band {
    fill: #2bdc2b;
}
.axis, .grid-red, .mark, .bracket {
    transform: translate(.5px, .5px);
}
.axis path {
    fill: none;
    stroke: #0c5c0c;
    stroke-width: 1;
}
.axis path.thick {
    stroke-width: 2;
    transform: translate(0, -.5px);
}
.axis path.tick {
    stroke: #1a8a1a;
}
.grid-red path {
    fill: none;
    stroke: #cc1010;
    stroke-width: 1;
}
.grid-red path.bright {
    stroke: #f00000;
}
.mark path {
    fill: none;
    stroke: #8a14e6;
    stroke-width: 1;
}
.rebar {
    fill: #0a9aa6;
    stroke: #0a9aa6;
    stroke-width: .3;
    font-family: "Liberation Sans", sans-serif;
    font-size: 11px;
}
.bracket {
    fill: none;
    stroke: #e01010;
    stroke-width: 1;
}
.hub {
    fill: none;
    stroke: #0f7a0f;
    stroke-width: 1;
}
.dim {
    fill: #fff;
    font-family: "Noto Sans", sans-serif;
    font-size: 17px;
}
.mid-text {
    text-anchor: middle;
}
```
